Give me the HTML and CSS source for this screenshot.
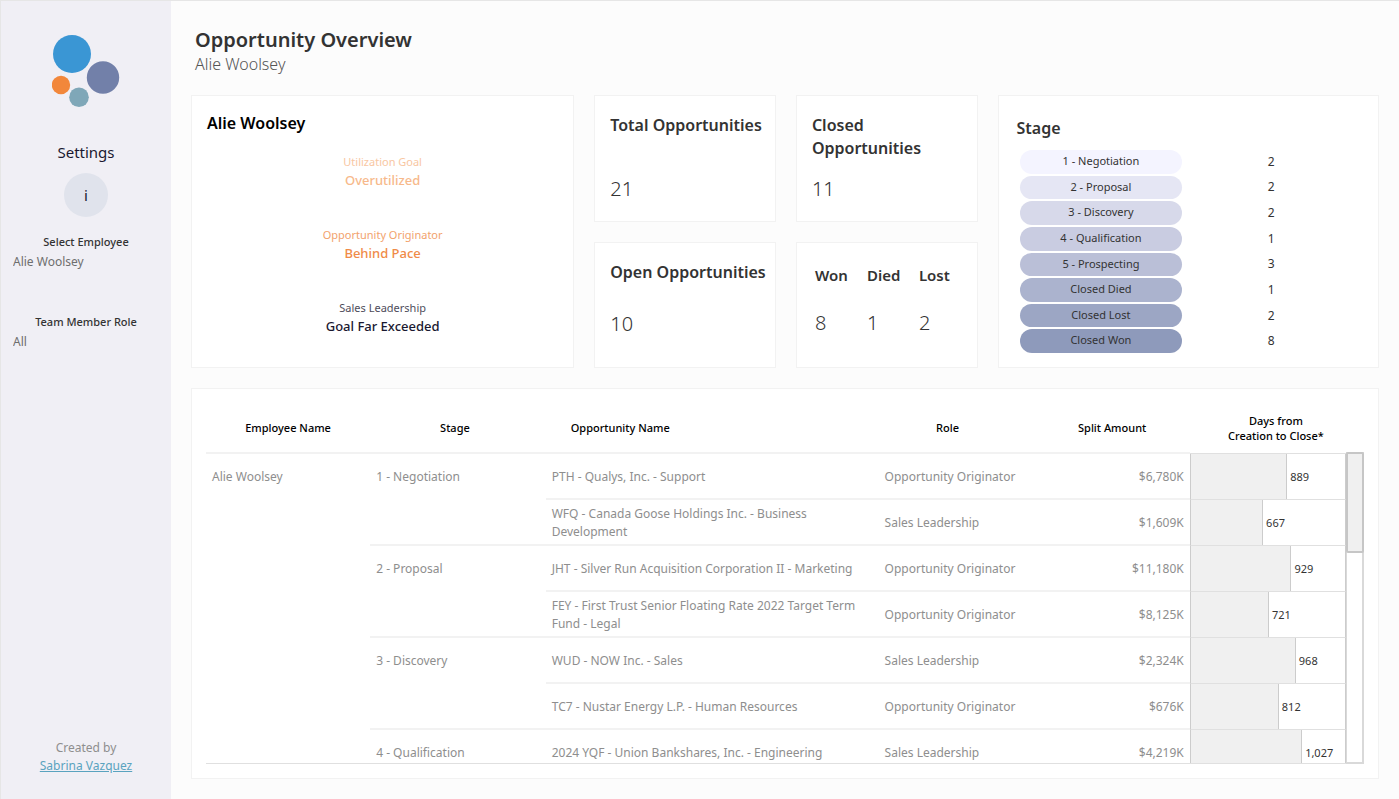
FILE: index.html
```html
<!DOCTYPE html>
<html lang="en">

<head>
    <meta charset="UTF-8">
    <meta name="viewport" content="width=device-width, initial-scale=1.0">
    <title>Opportunity Overview</title>
    <link rel="stylesheet" href="styles.css">
</head>

<body>

    <!-- sidebar -->
    <aside class="sidebar">
        <svg class="logo" viewBox="0 0 68 73" aria-hidden="true">
            <circle cx="20" cy="19" r="19" fill="#3a96d4"/>
            <circle cx="51" cy="42.5" r="16.2" fill="#7280a9"/>
            <circle cx="9" cy="50" r="9.2" fill="#f2873b"/>
            <circle cx="27" cy="62.3" r="9.8" fill="#7fa7b8"/>
        </svg>
        <h2 class="settings">Settings</h2>
        <button class="info" type="button">i</button>

        <div class="filter">
            <label for="employee">Select Employee</label>
            <select id="employee">
                <option>Alie Woolsey</option>
            </select>
        </div>
        <div class="filter">
            <label for="role">Team Member Role</label>
            <select id="role">
                <option>All</option>
            </select>
        </div>

        <div class="credit">
            <div>Created by</div>
            <a href="#">Sabrina Vazquez</a>
        </div>
    </aside>

    <main>
        <header class="page-header">
            <h1>Opportunity Overview</h1>
            <p>Alie Woolsey</p>
        </header>

        <!-- summary cards -->
        <section class="summary">
            <div class="card profile">
                <h2>Alie Woolsey</h2>
                <div class="goals">
                    <div class="goal goal-over">
                        <span>Utilization Goal</span>
                        <strong>Overutilized</strong>
                    </div>
                    <div class="goal goal-behind">
                        <span>Opportunity Originator</span>
                        <strong>Behind Pace</strong>
                    </div>
                    <div class="goal goal-exceeded">
                        <span>Sales Leadership</span>
                        <strong>Goal Far Exceeded</strong>
                    </div>
                </div>
            </div>

            <div class="card kpi">
                <h2>Total Opportunities</h2>
                <div class="number">21</div>
            </div>
            <div class="card kpi">
                <h2>Closed Opportunities</h2>
                <div class="number">11</div>
            </div>
            <div class="card kpi kpi-short">
                <h2>Open Opportunities</h2>
                <div class="number">10</div>
            </div>
            <div class="card results">
                <div>
                    <h3>Won</h3>
                    <div class="number">8</div>
                </div>
                <div>
                    <h3>Died</h3>
                    <div class="number">1</div>
                </div>
                <div>
                    <h3>Lost</h3>
                    <div class="number">2</div>
                </div>
            </div>

            <div class="card stages">
                <h2>Stage</h2>
                <ul>
                    <li><span class="pill pill1">1 - Negotiation</span><span>2</span></li>
                    <li><span class="pill pill2">2 - Proposal</span><span>2</span></li>
                    <li><span class="pill pill3">3 - Discovery</span><span>2</span></li>
                    <li><span class="pill pill4">4 - Qualification</span><span>1</span></li>
                    <li><span class="pill pill5">5 - Prospecting</span><span>3</span></li>
                    <li><span class="pill pill6">Closed Died</span><span>1</span></li>
                    <li><span class="pill pill7">Closed Lost</span><span>2</span></li>
                    <li><span class="pill pill8">Closed Won</span><span>8</span></li>
                </ul>
            </div>
        </section>

        <!-- opportunity table -->
        <section class="card detail">
            <div class="table-view">
                <table>
                    <colgroup>
                        <col class="col-employee">
                        <col class="col-stage">
                        <col class="col-name">
                        <col class="col-role">
                        <col class="col-amount">
                        <col class="col-days">
                    </colgroup>
                    <thead>
                        <tr>
                            <th>Employee Name</th>
                            <th class="th-stage">Stage</th>
                            <th class="th-name">Opportunity Name</th>
                            <th>Role</th>
                            <th class="th-amount">Split Amount</th>
                            <th class="th-days">Days from<br>Creation to Close*</th>
                        </tr>
                    </thead>
                    <tbody>
                        <tr>
                            <td class="top" rowspan="7">Alie Woolsey</td>
                            <td class="top" rowspan="2">1 - Negotiation</td>
                            <td>PTH - Qualys, Inc. - Support</td>
                            <td class="role">Opportunity Originator</td>
                            <td class="amount">$6,780K</td>
                            <td class="days"><div><i style="width: 62.5%"></i>889</div></td>
                        </tr>
                        <tr>
                            <td>WFQ - Canada Goose Holdings Inc. - Business Development</td>
                            <td class="role">Sales Leadership</td>
                            <td class="amount">$1,609K</td>
                            <td class="days"><div><i style="width: 46.9%"></i>667</div></td>
                        </tr>
                        <tr>
                            <td class="top" rowspan="2">2 - Proposal</td>
                            <td>JHT - Silver Run Acquisition Corporation II - Marketing</td>
                            <td class="role">Opportunity Originator</td>
                            <td class="amount">$11,180K</td>
                            <td class="days"><div><i style="width: 65.3%"></i>929</div></td>
                        </tr>
                        <tr>
                            <td>FEY - First Trust Senior Floating Rate 2022 Target Term Fund - Legal</td>
                            <td class="role">Opportunity Originator</td>
                            <td class="amount">$8,125K</td>
                            <td class="days"><div><i style="width: 50.7%"></i>721</div></td>
                        </tr>
                        <tr>
                            <td class="top" rowspan="2">3 - Discovery</td>
                            <td>WUD - NOW Inc. - Sales</td>
                            <td class="role">Sales Leadership</td>
                            <td class="amount">$2,324K</td>
                            <td class="days"><div><i style="width: 68.1%"></i>968</div></td>
                        </tr>
                        <tr>
                            <td>TC7 - Nustar Energy L.P. - Human Resources</td>
                            <td class="role">Opportunity Originator</td>
                            <td class="amount">$676K</td>
                            <td class="days"><div><i style="width: 57.1%"></i>812</div></td>
                        </tr>
                        <tr>
                            <td class="top">4 - Qualification</td>
                            <td>2024 YQF - Union Bankshares, Inc. - Engineering</td>
                            <td class="role">Sales Leadership</td>
                            <td class="amount">$4,219K</td>
                            <td class="days"><div><i style="width: 72.2%"></i>1,027</div></td>
                        </tr>
                    </tbody>
                </table>
            </div>
            <div class="scrollbar">
                <div class="thumb"></div>
            </div>
        </section>
    </main>

</body>

</html>
```

FILE: styles.css
```css
* {
    box-sizing: border-box;
    margin: 0;
    padding: 0;
}

body {
    display: flex;
    height: 100vh;
    border-top: 1px solid #e6e6e6;
    background-color: #fcfcfc;
    color: #333;
    font-family: "Noto Sans", "Open Sans", sans-serif;
    font-size: 12px;
    font-weight: 400;
    line-height: 18px;
}

ul {
    list-style: none;
}

/* sidebar */

.sidebar {
    display: flex;
    flex-direction: column;
    align-items: center;
    flex: 0 0 171px;
    padding: 34px 0 24px;
    border-left: 1px solid #e6e6e6;
    background-color: #f0eff5;
}

.logo {
    width: 68px;
    height: 73px;
}

.settings {
    margin-top: 32px;
    color: #1a1830;
    font-size: 15px;
    font-weight: 400;
    line-height: 24px;
}

.info {
    width: 44px;
    height: 44px;
    margin-top: 9px;
    margin-bottom: 16px;
    border: none;
    border-radius: 50%;
    background-color: #e0e3ec;
    color: #1a1830;
    font-family: inherit;
    font-size: 15px;
}

.filter {
    width: 100%;
    margin-bottom: 42px;
}

.filter label {
    display: block;
    font-size: 11px;
    font-weight: 500;
    text-align: center;
}

.filter select {
    display: block;
    width: 100%;
    height: 20px;
    padding-left: 12px;
    border: none;
    background: none;
    color: #6e6e6e;
    font-family: inherit;
    font-size: 12px;
    appearance: none;
}

.credit {
    margin-top: auto;
    color: #8e8e8e;
    text-align: center;
}

.credit a {
    color: #5aa3bf;
}

/* page */

main {
    display: flex;
    flex-direction: column;
    flex: 1;
    min-width: 0;
    padding: 26px 20px 20px;
}

.page-header {
    padding: 0 4px;
    margin-bottom: 20px;
}

h1 {
    font-size: 20px;
    font-weight: 600;
    line-height: 26px;
}

.page-header p {
    color: #555;
    font-size: 16px;
    font-weight: 300;
    line-height: 22px;
}

.card {
    border: 1px solid #f2f2f2;
    background-color: #fff;
}

.card h2 {
    font-size: 16px;
    font-weight: 600;
    line-height: 23px;
}

.number {
    font-size: 20px;
    font-weight: 300;
    line-height: 26px;
}

.summary {
    display: grid;
    grid-template-columns: minmax(0, 2.11fr) minmax(0, 1fr) minmax(0, 1fr) minmax(0, 2.1fr);
    grid-template-rows: 1fr 1fr;
    gap: 20px;
    min-height: 273px;
    margin-bottom: 20px;
}

.profile {
    grid-row: 1 / 3;
    padding: 16px 15px;
}

.profile h2 {
    color: #000;
}

.goals {
    display: flex;
    flex-direction: column;
    gap: 37px;
    margin-top: 18px;
    text-align: center;
}

.goal span,
.goal strong {
    display: block;
}

.goal span {
    font-size: 11px;
    opacity: 0.8;
}

.goal strong {
    font-size: 13px;
    font-weight: 500;
}

.goal-over {
    color: #f7b98b;
}

.goal-behind {
    color: #f08b48;
}

.goal-exceeded {
    color: #1a1830;
}

.kpi {
    padding: 18px 8px 18px 15px;
}

.kpi h2 {
    min-height: 46px;
    margin-bottom: 16px;
}

.kpi-short {
    grid-column: 2;
}

.kpi-short h2 {
    min-height: 34px;
}

.results {
    display: grid;
    grid-template-columns: repeat(3, 52px);
    padding: 21px 18px;
}

.results h3 {
    margin-bottom: 24px;
    font-size: 15px;
    font-weight: 600;
    line-height: 22px;
}

.stages {
    display: flex;
    flex-direction: column;
    grid-column: 4;
    grid-row: 1 / 3;
    padding: 21px 18px 14px;
}

.stages ul {
    display: flex;
    flex-direction: column;
    flex: 1;
    gap: 2px;
    margin-top: 10px;
    padding-left: 3px;
}

.stages li {
    display: grid;
    grid-template-columns: 163fr 178fr;
    align-items: center;
    flex: 1;
    text-align: center;
}

.stages .pill {
    height: 100%;
    border-radius: 12px;
    font-size: 11px;
    line-height: 22px;
}

.pill1 { background-color: #f4f4ff; }
.pill2 { background-color: #e5e6f4; }
.pill3 { background-color: #d7d9ea; }
.pill4 { background-color: #c9cce1; }
.pill5 { background-color: #babfd7; }
.pill6 { background-color: #abb3ce; }
.pill7 { background-color: #9ca6c4; }
.pill8 { background-color: #8e9abb; }

/* table */

.detail {
    display: flex;
    flex: 1;
    min-height: 0;
    padding: 14px;
}

.table-view {
    flex: 1;
    overflow: hidden;
    border-bottom: 1px solid #e0e0e0;
}

table {
    width: 100%;
    border-spacing: 0;
    table-layout: fixed;
}

.col-employee { width: 14.4%; }
.col-stage { width: 15.4%; }
.col-name { width: 29.2%; }
.col-role { width: 12.1%; }
.col-amount { width: 15.2%; }
.col-days { width: 13.7%; }

th {
    height: 51px;
    border-bottom: 2px solid #f2f2f2;
    color: #000;
    font-size: 11px;
    font-weight: 500;
    line-height: 15px;
    white-space: nowrap;
}

.th-stage {
    padding-right: 6px;
}

.th-name {
    padding-left: 25px;
    text-align: left;
}

.th-amount {
    padding-left: 18px;
}

.th-days {
    padding-left: 16px;
    border-bottom: 1px solid #e0e0e0;
}

td {
    height: 46px;
    padding: 2px 6px 0;
    border-bottom: 2px solid #f2f2f2;
    color: #8e8e8e;
}

.top {
    padding-top: 14px;
    vertical-align: top;
}

.role {
    padding-right: 0;
    white-space: nowrap;
}

.amount {
    text-align: right;
}

.days {
    padding: 0;
    border-bottom: 1px solid #e0e0e0;
    border-left: 1px solid #ccc;
    border-right: 1px solid #ccc;
    color: #333;
    font-size: 11px;
}

.days div {
    display: flex;
    align-items: center;
    gap: 3px;
    height: 45px;
}

.days i {
    align-self: stretch;
    border-right: 1px solid #ccc;
    background-color: #f0f0f0;
}

.scrollbar {
    width: 18px;
    margin-top: 49px;
    border: 2px solid #d9d9d9;
    border-left-width: 1px;
}

.thumb {
    height: 101px;
    margin: -2px -2px 0 -1px;
    border: 2px solid #c6c6c6;
    border-radius: 2px;
    background-color: #f0f0f0;
}
```
